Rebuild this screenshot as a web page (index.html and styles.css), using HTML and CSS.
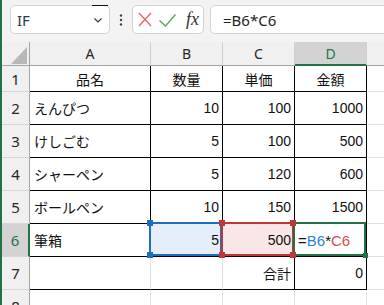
FILE: index.html
```html
<!DOCTYPE html>
<html lang="ja">
<head>
<meta charset="utf-8">
<link rel="stylesheet" href="styles.css">
</head>
<body>
<div class="app">
  <div class="toolbar">
    <div class="namebox">
      <span class="name">IF</span>
      <svg class="chev" width="8" height="5" viewBox="0 0 8 5"><polyline points="0.5,0.5 4,4 7.5,0.5" fill="none" stroke="#333" stroke-width="1.1"/></svg>
      <span class="tick"></span>
    </div>
    <div class="dots">
      <svg width="4" height="12" viewBox="0 0 4 12"><circle cx="2" cy="1.5" r="1.2" fill="#444"/><circle cx="2" cy="6" r="1.2" fill="#444"/><circle cx="2" cy="10.5" r="1.2" fill="#444"/></svg>
    </div>
    <div class="fxbox">
      <svg class="ico-x" width="14" height="15" viewBox="0 0 14 15"><path d="M1 1 L13 14 M13 1 L1 14" stroke="#e8676a" stroke-width="1.4" fill="none"/></svg>
      <svg class="ico-ok" width="17" height="13" viewBox="0 0 17 13"><path d="M0.5 6.5 L6.5 12 L16.5 0.5" stroke="#55a860" stroke-width="1.4" fill="none"/></svg>
      <span class="fx">fx</span>
    </div>
    <div class="formula">=B6*C6</div>
  </div>
  <div class="sheet">
    <div class="corner"><svg width="16" height="17" viewBox="0 0 16 17"><polygon points="16,0 16,17 0,17" fill="#b8b8b8"/></svg></div>
    <div class="ch">A</div>
    <div class="ch">B</div>
    <div class="ch">C</div>
    <div class="ch sel">D</div>
    <div class="ch last"></div>

    <div class="rh">1</div>
    <div class="c ctr">品名</div>
    <div class="c ctr">数量</div>
    <div class="c ctr">単価</div>
    <div class="c ctr">金額</div>
    <div class="g last"></div>

    <div class="rh">2</div>
    <div class="c">えんぴつ</div>
    <div class="c num">10</div>
    <div class="c num">100</div>
    <div class="c num">1000</div>
    <div class="g last"></div>

    <div class="rh">3</div>
    <div class="c">けしごむ</div>
    <div class="c num">5</div>
    <div class="c num">100</div>
    <div class="c num">500</div>
    <div class="g last"></div>

    <div class="rh">4</div>
    <div class="c">シャーペン</div>
    <div class="c num">5</div>
    <div class="c num">120</div>
    <div class="c num">600</div>
    <div class="g last"></div>

    <div class="rh">5</div>
    <div class="c">ボールペン</div>
    <div class="c num">10</div>
    <div class="c num">150</div>
    <div class="c num">1500</div>
    <div class="g last"></div>

    <div class="rh sel">6</div>
    <div class="c">筆箱</div>
    <div class="c num ref-b">5<span class="h h-tl hb"></span><span class="h h-bl hb"></span></div>
    <div class="c num ref-c">500<span class="h h-tl hr"></span><span class="h h-bl hr"></span><span class="h h-tr hr"></span><span class="h h-br hr"></span></div>
    <div class="c edit">=<span class="tb">B6</span>*<span class="tr">C6</span><span class="fill"></span></div>
    <div class="g last"></div>

    <div class="rh">7</div>
    <div class="c gr"></div>
    <div class="c gr"></div>
    <div class="c num">合計</div>
    <div class="c num">0</div>
    <div class="g last"></div>

    <div class="rh">8</div>
    <div class="g"></div>
    <div class="g"></div>
    <div class="g"></div>
    <div class="g"></div>
    <div class="g last"></div>
  </div>
</div>
</body>
</html>
```

FILE: styles.css
```css
html, body {
  margin: 0;
  padding: 0;
  overflow: hidden;
}
body {
  width: 384px;
  height: 305px;
  background: #ffffff;
}
.app {
  height: 305px;
  border-left: 2px solid #217346;
  overflow: hidden;
}
.toolbar {
  height: 42px;
  box-sizing: border-box;
  background: #f3f3f3;
  display: flex;
  align-items: flex-start;
  padding: 5px 0 0 8px;
}
.namebox {
  position: relative;
  width: 100px;
  height: 29px;
  box-sizing: border-box;
  background: #fff;
  border: 1px solid #d2d2d2;
  border-radius: 5px;
  display: flex;
  align-items: center;
  justify-content: space-between;
  padding: 0 7px 0 6px;
}
.name {
  font-family: "Noto Sans", sans-serif;
  font-size: 15px;
  color: #2e3a48;
}
.chev {
  margin-top: 1px;
}
.tick {
  position: absolute;
  top: -1px;
  right: 1px;
  width: 16px;
  height: 1px;
  background: #111;
}
.dots {
  width: 22px;
  height: 29px;
  display: flex;
  align-items: center;
  justify-content: center;
}
.fxbox {
  width: 72px;
  height: 29px;
  box-sizing: border-box;
  background: #fff;
  border: 1px solid #d2d2d2;
  border-radius: 5px;
  display: flex;
  align-items: center;
  padding-left: 5px;
}
.ico-x {
  margin-right: 7px;
}
.ico-ok {
  margin-right: 10px;
  margin-top: 1px;
}
.fx {
  font-family: "Liberation Serif", serif;
  font-style: italic;
  font-size: 18px;
  color: #333;
  line-height: 1;
  margin-top: -1px;
}
.formula {
  flex: 1;
  margin-left: 6px;
  margin-right: -10px;
  height: 29px;
  box-sizing: border-box;
  background: #fff;
  border: 1px solid #d2d2d2;
  border-radius: 5px;
  display: flex;
  align-items: center;
  padding-left: 12px;
  font-family: "Noto Sans", sans-serif;
  font-size: 15px;
  color: #222;
}
.sheet {
  display: grid;
  grid-template-columns: 28px 121px 72px 72px 72px 1fr;
  grid-template-rows: 24px 26px repeat(7, 33px);
}
.sheet > div {
  box-sizing: border-box;
  border-right: 1px solid #000;
  border-bottom: 1px solid #000;
  display: flex;
  align-items: center;
  font-family: "Liberation Sans", "Noto Sans CJK JP", sans-serif;
  font-size: 14px;
  color: #111;
  white-space: nowrap;
}
.sheet > .corner {
  background: #f0f0f0;
  border-right: 1px solid #a5a5a5;
  border-bottom: 1px solid #a5a5a5;
  align-items: flex-end;
  justify-content: flex-end;
  padding: 0 2px 1px 0;
}
.corner svg {
  display: block;
}
.sheet > .ch {
  background: #f0f0f0;
  border-right: 1px solid #cfcfcf;
  border-bottom: 1px solid #a5a5a5;
  justify-content: center;
  font-family: "Noto Sans", sans-serif;
  font-size: 14px;
  color: #262626;
}
.sheet > .ch.sel {
  background: #d3d3d3;
  color: #217346;
  border-bottom: 2px solid #217346;
}
.sheet > .ch.last {
  border-right: none;
}
.sheet > .rh {
  background: #f0f0f0;
  border-right: 1px solid #a5a5a5;
  border-bottom: 1px solid #d6d6d6;
  justify-content: center;
  font-family: "Noto Sans", sans-serif;
  font-size: 15px;
  color: #262626;
}
.sheet > .rh.sel {
  background: #d3d3d3;
  color: #217346;
  border-right: 2px solid #217346;
}
.sheet > .c {
  padding: 0 4px;
}
.sheet > .ctr {
  justify-content: center;
}
.sheet > .num {
  justify-content: flex-end;
  padding-right: 3px;
}
.sheet > .gr {
  border-right-color: #dedede;
}
.sheet > .g {
  border-right: 1px solid #e1e1e1;
  border-bottom: 1px solid #e1e1e1;
}
.sheet > .last {
  border-right: none;
}
.sheet > .g.last {
  border-bottom: 1px solid #e1e1e1;
}
.ref-b, .ref-c, .edit {
  position: relative;
}
.sheet > .ref-b {
  background: #e5eef9;
}
.sheet > .ref-c {
  background: #f9e6e6;
}
.ref-b::after, .ref-c::after, .edit::after {
  content: "";
  position: absolute;
  top: -2px;
  left: -2px;
  right: 0;
  bottom: 0;
  border: 2px solid;
  pointer-events: none;
}
.ref-b::after {
  border-color: #1b6ec2;
  z-index: 1;
}
.ref-c::after {
  border-color: #c2363b;
  z-index: 2;
}
.edit::after {
  border-color: #217346;
  z-index: 3;
}
.sheet > .edit {
  padding-left: 3px;
  font-size: 15px;
}
.tb {
  color: #2b82d9;
}
.tr {
  color: #e04a4f;
}
.h {
  position: absolute;
  width: 6px;
  height: 6px;
  z-index: 5;
}
.hb {
  background: #1b6ec2;
}
.hr {
  background: #c2363b;
}
.h-tl { left: -4px; top: -4px; }
.h-bl { left: -4px; bottom: -2px; }
.h-tr { right: -2px; top: -4px; }
.h-br { right: -2px; bottom: -2px; }
.fill {
  position: absolute;
  right: -2px;
  bottom: -2px;
  width: 5px;
  height: 5px;
  background: #217346;
  z-index: 6;
}
```
